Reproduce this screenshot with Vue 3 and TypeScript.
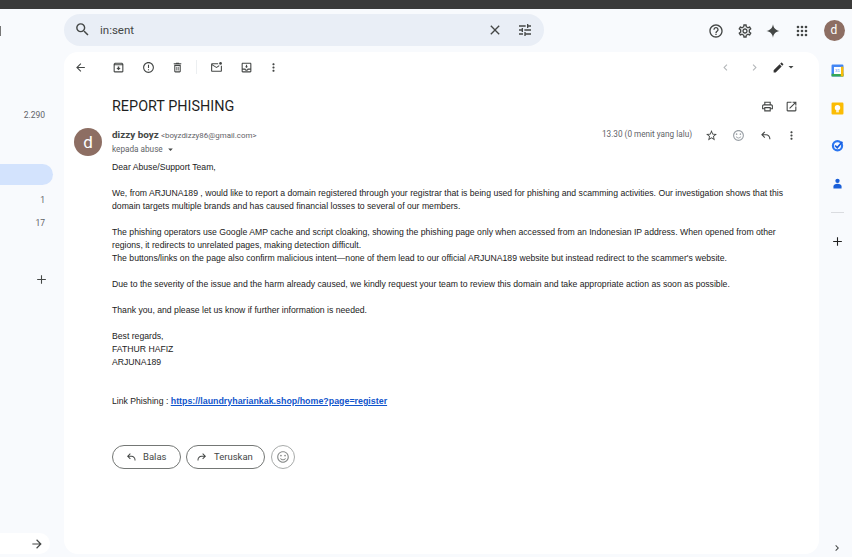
<template>
  <div class="page">
    <div class="topstrip"></div>

    <header class="header">
      <div class="menu-edge"></div>
      <div class="search">
        <svg class="ic search-ic" viewBox="0 0 24 24"><path :d="icons.search" /></svg>
        <span class="search-text">in:sent</span>
        <svg class="ic close-ic" viewBox="0 0 24 24"><path :d="icons.close" /></svg>
        <svg class="ic tune-ic" viewBox="0 0 24 24"><path :d="icons.tune" /></svg>
      </div>
      <div class="header-actions">
        <svg class="ic" viewBox="0 0 24 24"><path :d="icons.help" /></svg>
        <svg class="ic" viewBox="0 0 24 24"><path :d="icons.settings" /></svg>
        <svg class="ic" viewBox="0 0 24 24"><path :d="icons.spark" /></svg>
        <svg class="ic" viewBox="0 0 24 24"><path :d="icons.apps" /></svg>
      </div>
      <div class="account">d</div>
    </header>

    <div class="body">
      <aside class="sidebar">
        <span class="count count-main">2.290</span>
        <div class="active-pill"></div>
        <span class="count count-one">1</span>
        <span class="count count-two">17</span>
        <svg class="side-plus" viewBox="0 0 24 24"><path :d="icons.plus" /></svg>
        <div class="side-foot">
          <svg viewBox="0 0 24 24"><path :d="icons.arrowRight" /></svg>
        </div>
      </aside>

      <main class="panel">
        <div class="toolbar">
          <svg class="tb back" viewBox="0 0 24 24"><path :d="icons.back" /></svg>
          <svg class="tb first" viewBox="0 0 24 24"><path :d="icons.archive" /></svg>
          <svg class="tb" viewBox="0 0 24 24"><path :d="icons.report" /></svg>
          <svg class="tb" viewBox="0 0 24 24"><path :d="icons.trash" /></svg>
          <span class="tb-divider"></span>
          <svg class="tb" viewBox="0 0 24 24"><path :d="icons.unread" /><circle cx="19.5" cy="4.5" r="2.5" /></svg>
          <svg class="tb" viewBox="0 0 24 24"><path :d="icons.moveTo" /></svg>
          <svg class="tb more" viewBox="0 0 24 24"><path :d="icons.more" /></svg>
          <div class="pager">
            <svg class="tb faded" viewBox="0 0 24 24"><path :d="icons.prev" /></svg>
            <svg class="tb faded" viewBox="0 0 24 24"><path :d="icons.next" /></svg>
            <svg class="tb pen" viewBox="0 0 24 24"><path :d="icons.pen" /></svg>
            <svg class="caret-big" viewBox="0 0 24 24"><path :d="icons.caret" /></svg>
          </div>
        </div>

        <div class="subject-row">
          <h1 class="subject">REPORT PHISHING</h1>
          <svg class="tb print" viewBox="0 0 24 24"><path :d="icons.print" /></svg>
          <svg class="tb" viewBox="0 0 24 24"><path :d="icons.open" /></svg>
        </div>

        <div class="message">
          <div class="avatar">d</div>
          <div class="content">
            <div class="meta">
              <div class="sender">
                <div class="from"><b class="name">dizzy boyz</b> <span class="addr">&lt;boyzdizzy86@gmail.com&gt;</span></div>
                <div class="to">kepada abuse <svg class="caret" viewBox="0 0 24 24"><path :d="icons.caret" /></svg></div>
              </div>
              <span class="time">13.30 (0 menit yang lalu)</span>
              <svg class="tb meta-ic" viewBox="0 0 24 24"><path :d="icons.star" /></svg>
              <svg class="tb meta-ic smile" viewBox="0 0 24 24"><path :d="icons.smile" /></svg>
              <svg class="tb meta-ic" viewBox="0 0 24 24"><path :d="icons.reply" /></svg>
              <svg class="tb meta-ic last" viewBox="0 0 24 24"><path :d="icons.more" /></svg>
            </div>

            <div class="mail">
              <p>Dear Abuse/Support Team,</p>
              <p>We, from ARJUNA189 , would like to report a domain registered through your registrar that is being used for phishing and scamming activities. Our investigation shows that this<br />domain targets multiple brands and has caused financial losses to several of our members.</p>
              <p>The phishing operators use Google AMP cache and script cloaking, showing the phishing page only when accessed from an Indonesian IP address. When opened from other<br />regions, it redirects to unrelated pages, making detection difficult.<br />The buttons/links on the page also confirm malicious intent—none of them lead to our official ARJUNA189 website but instead redirect to the scammer's website.</p>
              <p>Due to the severity of the issue and the harm already caused, we kindly request your team to review this domain and take appropriate action as soon as possible.</p>
              <p>Thank you, and please let us know if further information is needed.</p>
              <p>Best regards,<br />FATHUR HAFIZ<br />ARJUNA189</p>
              <p class="link-line">Link Phishing : <a href="#" class="link">https://laundryhariankak.shop/home?page=register</a></p>
            </div>

            <div class="actions">
              <button class="pill reply-btn">
                <svg viewBox="0 0 24 24"><path :d="icons.reply" /></svg>
                Balas
              </button>
              <button class="pill forward-btn">
                <svg class="flip" viewBox="0 0 24 24"><path :d="icons.reply" /></svg>
                Teruskan
              </button>
              <button class="emoji-btn">
                <svg viewBox="0 0 24 24"><path :d="icons.smile" /></svg>
              </button>
            </div>
          </div>
        </div>
      </main>

      <aside class="rail">
        <svg class="rail-ic" viewBox="0 0 24 24">
          <rect x="1" y="1" width="22" height="22" rx="2" fill="#4285f4" />
          <rect x="1" y="18" width="22" height="5" fill="#34a853" />
          <rect x="18" y="5" width="5" height="18" fill="#fbbc04" />
          <rect x="5.5" y="5.5" width="13" height="13" fill="#fff" />
          <text x="12" y="15.5" text-anchor="middle" class="cal-text">31</text>
        </svg>
        <svg class="rail-ic" viewBox="0 0 24 24">
          <rect x="1" y="1" width="22" height="22" rx="2" fill="#fbbc04" />
          <circle cx="12" cy="10.5" r="5" fill="#fff" />
          <rect x="9.5" y="13" width="5" height="3" fill="#fff" />
          <rect x="9.5" y="17" width="5" height="2" fill="#fff" />
        </svg>
        <svg class="rail-ic" viewBox="0 0 24 24">
          <circle cx="12" cy="12.5" r="8.5" fill="none" stroke="#2a75f0" stroke-width="4" />
          <path d="M7.5 12l4 4L21 5" fill="none" stroke="#1a5fe0" stroke-width="3.2" />
        </svg>
        <svg class="rail-ic" viewBox="0 0 24 24">
          <circle cx="12" cy="7" r="4" fill="#1a5fd8" />
          <path d="M4.5 21v-3.5c0-3 3.4-5 7.5-5s7.500 2 7.500 5V21z" fill="#1a5fd8" />
        </svg>
        <div class="rail-divider"></div>
        <svg class="rail-plus" viewBox="0 0 24 24"><path :d="icons.plus" /></svg>
        <svg class="rail-chevron" viewBox="0 0 24 24"><path :d="icons.next" /></svg>
      </aside>
    </div>
  </div>
</template>

<script setup lang="ts">
const icons: Record<string, string> = {
  search: 'M15.5 14h-.79l-.28-.27A6.471 6.471 0 0 0 16 9.5 6.5 6.5 0 1 0 9.5 16c1.61 0 3.09-.59 4.23-1.57l.27.28v.79l5 4.99L20.49 19l-4.99-5zm-6 0C7.01 14 5 11.99 5 9.5S7.01 5 9.5 5 14 7.01 14 9.5 11.99 14 9.5 14z',
  close: 'M19 6.41L17.59 5 12 10.59 6.41 5 5 6.41 10.59 12 5 17.59 6.41 19 12 13.41 17.59 19 19 17.59 13.41 12z',
  tune: 'M3 17v2h6v-2H3zM3 5v2h10V5H3zm10 16v-2h8v-2h-8v-2h-2v6h2zM7 9v2H3v2h4v2h2V9H7zm14 4v-2H11v2h10zm-6-4h2V7h4V5h-4V3h-2v6z',
  help: 'M11 18h2v-2h-2v2zm1-16C6.48 2 2 6.48 2 12s4.48 10 10 10 10-4.48 10-10S17.52 2 12 2zm0 18c-4.41 0-8-3.59-8-8s3.59-8 8-8 8 3.59 8 8-3.59 8-8 8zm0-14c-2.21 0-4 1.79-4 4h2c0-1.1.9-2 2-2s2 .9 2 2c0 2-3 1.75-3 5h2c0-2.25 3-2.5 3-5 0-2.21-1.79-4-4-4z',
  settings: 'M19.43 12.98c.04-.32.07-.64.07-.98 0-.34-.03-.66-.07-.98l2.11-1.65c.19-.15.24-.42.12-.64l-2-3.46c-.09-.16-.26-.25-.44-.25-.06 0-.12.01-.17.03l-2.49 1c-.52-.4-1.08-.73-1.69-.98l-.38-2.65C14.46 2.18 14.25 2 14 2h-4c-.25 0-.46.18-.49.42l-.38 2.65c-.61.25-1.17.59-1.69.98l-2.49-1c-.06-.02-.12-.03-.18-.03-.17 0-.34.09-.43.25l-2 3.46c-.13.22-.07.49.12.64l2.11 1.65c-.04.32-.07.65-.07.98 0 .33.03.66.07.98l-2.11 1.65c-.19.15-.24.42-.12.64l2 3.46c.09.16.26.25.44.25.06 0 .12-.01.17-.03l2.49-1c.52.4 1.08.73 1.69.98l.38 2.65c.03.24.24.42.49.42h4c.25 0 .46-.18.49-.42l.38-2.65c.61-.25 1.17-.59 1.69-.98l2.49 1c.06.02.12.03.18.03.17 0 .34-.09.43-.25l2-3.46c.12-.22.07-.49-.12-.64l-2.11-1.65zm-1.98-1.71c.04.31.05.52.05.73 0 .21-.02.43-.05.73l-.14 1.13.89.7 1.08.84-.7 1.21-1.27-.51-1.04-.42-.9.68c-.43.32-.84.56-1.25.73l-1.06.43-.16 1.13-.2 1.35h-1.4l-.19-1.35-.16-1.13-1.06-.43c-.43-.18-.83-.41-1.23-.71l-.91-.7-1.06.43-1.27.51-.7-1.21 1.08-.84.89-.7-.14-1.13c-.03-.31-.05-.54-.05-.74s.02-.43.05-.73l.14-1.13-.89-.7-1.08-.84.7-1.21 1.27.51 1.04.42.9-.68c.43-.32.84-.56 1.25-.73l1.06-.43.16-1.13.2-1.35h1.39l.19 1.35.16 1.13 1.06.43c.43.18.83.41 1.23.71l.91.7 1.06-.43 1.27-.51.7 1.21-1.07.85-.89.7.14 1.13zM12 8c-2.21 0-4 1.79-4 4s1.79 4 4 4 4-1.79 4-4-1.79-4-4-4zm0 6c-1.1 0-2-.9-2-2s.9-2 2-2 2 .9 2 2-.9 2-2 2z',
  spark: 'M12 2c.7 5.600 4.400 9.300 10 10-5.600.7-9.300 4.400-10 10-.7-5.600-4.400-9.300-10-10 5.600-.7 9.300-4.400 10-10z',
  apps: 'M6 4a2 2 0 1 0 0 4 2 2 0 0 0 0-4zM12 4a2 2 0 1 0 0 4 2 2 0 0 0 0-4zM18 4a2 2 0 1 0 0 4 2 2 0 0 0 0-4zM6 10a2 2 0 1 0 0 4 2 2 0 0 0 0-4zM12 10a2 2 0 1 0 0 4 2 2 0 0 0 0-4zM18 10a2 2 0 1 0 0 4 2 2 0 0 0 0-4zM6 16a2 2 0 1 0 0 4 2 2 0 0 0 0-4zM12 16a2 2 0 1 0 0 4 2 2 0 0 0 0-4zM18 16a2 2 0 1 0 0 4 2 2 0 0 0 0-4z',
  plus: 'M20 13h-7v7h-2v-7H4v-2h7V4h2v7h7v2z',
  arrowRight: 'M12 4l-1.41 1.41L16.17 11H4v2h12.17l-5.58 5.59L12 20l8-8z',
  back: 'M20 11H7.83l5.59-5.59L12 4l-8 8 8 8 1.41-1.41L7.83 13H20v-2z',
  archive: 'M20.54 5.23l-1.39-1.68C18.88 3.21 18.47 3 18 3H6c-.47 0-.88.21-1.16.55L3.46 5.23C3.17 5.57 3 6.02 3 6.5V19c0 1.1.9 2 2 2h14c1.1 0 2-.9 2-2V6.5c0-.48-.17-.93-.46-1.27zM6.24 5h11.52l.81.97H5.44l.8-.97zM5 19V8h14v11H5zm8.45-9h-2.9v3H8l4 4 4-4h-2.55z',
  report: 'M11 15h2v2h-2zm0-8h2v6h-2zm.99-5C6.47 2 2 6.48 2 12s4.47 10 9.99 10C17.52 22 22 17.52 22 12S17.52 2 11.99 2zM12 20c-4.42 0-8-3.58-8-8s3.58-8 8-8 8 3.58 8 8-3.58 8-8 8z',
  trash: 'M6 19c0 1.1.9 2 2 2h8c1.1 0 2-.9 2-2V7H6v12zM8 9h8v10H8V9zm7.5-5l-1-1h-5l-1 1H5v2h14V4zM10 10.5h1.4v7H10zM12.6 10.5H14v7h-1.4z',
  unread: 'M20 8.9V18H4V8l8 5 5-3.1V7.5L12 11 4 6h11V4H4c-1.1 0-2 .9-2 2v12c0 1.1.9 2 2 2h16c1.1 0 2-.9 2-2V8.9z',
  moveTo: 'M19 3H5c-1.1 0-2 .9-2 2v14c0 1.1.9 2 2 2h14c1.1 0 2-.9 2-2V5c0-1.1-.9-2-2-2zm0 16H5v-3h3.56c.69 1.19 1.97 2 3.45 2s2.75-.81 3.45-2H19v3zm0-5h-4.99c0 1.1-.9 2-2 2s-2-.9-2-2H5V5h14v9zM15 10h-2V7h-2v3H9l3 3z',
  more: 'M12 8c1.1 0 2-.9 2-2s-.9-2-2-2-2 .9-2 2 .9 2 2 2zm0 2c-1.1 0-2 .9-2 2s.9 2 2 2 2-.9 2-2-.9-2-2-2zm0 6c-1.1 0-2 .9-2 2s.9 2 2 2 2-.9 2-2-.9-2-2-2z',
  prev: 'M15.41 7.41L14 6l-6 6 6 6 1.41-1.41L10.83 12z',
  next: 'M10 6L8.59 7.41 13.17 12l-4.58 4.59L10 18l6-6z',
  pen: 'M3 17.25V21h3.75L17.81 9.94l-3.75-3.75L3 17.25zM20.71 7.04c.39-.39.39-1.02 0-1.41l-2.34-2.34c-.39-.39-1.02-.39-1.41 0l-1.83 1.83 3.75 3.75 1.83-1.83z',
  caret: 'M7 10l5 5 5-5z',
  print: 'M19 8h-1V3H6v5H5c-1.66 0-3 1.34-3 3v6h4v4h12v-4h4v-6c0-1.66-1.34-3-3-3zM8 5h8v3H8V5zm8 14H8v-4h8v4zm4-4h-2v-2H6v2H4v-4c0-.55.45-1 1-1h14c.55 0 1 .45 1 1v4z',
  open: 'M19 19H5V5h7V3H5c-1.11 0-2 .9-2 2v14c0 1.1.89 2 2 2h14c1.1 0 2-.9 2-2v-7h-2v7zM14 3v2h3.59l-9.83 9.83 1.41 1.41L19 6.41V10h2V3h-7z',
  star: 'M22 9.24l-7.19-.62L12 2 9.19 8.63 2 9.24l5.46 4.73L5.82 21 12 17.27 18.18 21l-1.63-7.03L22 9.24zM12 15.4l-3.76 2.27 1-4.28-3.32-2.88 4.38-.38L12 6.1l1.71 4.04 4.38.38-3.32 2.88 1 4.28L12 15.4z',
  smile: 'M11.99 2C6.47 2 2 6.48 2 12s4.47 10 9.99 10C17.52 22 22 17.52 22 12S17.52 2 11.99 2zM12 20c-4.42 0-8-3.58-8-8s3.58-8 8-8 8 3.58 8 8-3.58 8-8 8zM8.5 8a1.5 1.5 0 1 0 0 3 1.5 1.5 0 0 0 0-3zM15.5 8a1.5 1.5 0 1 0 0 3 1.5 1.5 0 0 0 0-3zM12 16c-1.48 0-2.75-.81-3.45-2H6.88c.8 2.05 2.79 3.5 5.12 3.5s4.32-1.45 5.12-3.5h-1.67c-.7 1.19-1.97 2-3.45 2z',
  reply: 'M21 19h-2v-1.5c0-3.3-2.7-6-6-6H7.83l3.58 3.59L10 16.5l-6-6 6-6 1.41 1.41L7.83 9.5H13c4.4 0 8 3.6 8 8z',
}
</script>

<style>
html,
body {
  margin: 0;
  overflow: hidden;
  background: #f8fafd;
}
</style>

<style scoped>
.page {
  width: 852px;
  height: 557px;
  display: flex;
  flex-direction: column;
  background: #f8fafd;
  font-family: "Liberation Sans", Arial, sans-serif;
  color: #222;
  overflow: hidden;
}

.topstrip {
  height: 9px;
  background: #3a3a3a;
  flex-shrink: 0;
}

.header {
  height: 43px;
  display: flex;
  align-items: center;
  flex-shrink: 0;
}

.menu-edge {
  width: 1px;
  height: 10px;
  margin-right: 63px;
  background: #777;
}

.search {
  width: 480px;
  height: 32px;
  margin-top: -2px;
  border-radius: 16px;
  background: #e9eef6;
  display: flex;
  align-items: center;
  box-sizing: border-box;
  padding-left: 10px;
}

.ic {
  width: 16px;
  height: 16px;
  fill: #444746;
  flex-shrink: 0;
}

.search-ic {
  width: 17px;
  height: 17px;
}

.search-text {
  margin-left: 9px;
  flex: 1;
  font-family: Roboto, sans-serif;
  font-size: 11.5px;
  color: #444746;
}

.close-ic {
  margin-right: 14px;
}

.tune-ic {
  margin-right: 11px;
}

.header-actions {
  margin-left: 164px;
  display: flex;
  gap: 12.5px;
  align-items: center;
}

.account {
  width: 21px;
  height: 21px;
  margin-left: 14px;
  border-radius: 50%;
  background: #8d6e63;
  color: #fff;
  font-family: Roboto, sans-serif;
  font-size: 12px;
  line-height: 21px;
  text-align: center;
}

.body {
  flex: 1;
  display: flex;
  min-height: 0;
  padding-bottom: 3px;
}

.sidebar {
  width: 64px;
  flex-shrink: 0;
  display: flex;
  flex-direction: column;
  align-items: flex-start;
  font-family: Roboto, sans-serif;
}

.count {
  width: 45px;
  text-align: right;
  font-size: 8.5px;
  color: #5f6368;
  line-height: 10px;
}

.count-main {
  margin-top: 58px;
}

.active-pill {
  width: 53px;
  height: 21px;
  margin-top: 44px;
  background: #d3e3fd;
  border-radius: 0 11px 11px 0;
}

.count-one {
  margin-top: 10px;
}

.count-two {
  margin-top: 13px;
}

.side-plus {
  width: 13px;
  height: 13px;
  margin: 45px 0 0 35px;
  fill: #444746;
}

.side-foot {
  width: 50px;
  height: 21px;
  margin-top: auto;
  background: #fff;
  border-radius: 0 11px 11px 0;
  display: flex;
  align-items: center;
  justify-content: flex-end;
  padding-right: 6px;
  box-sizing: border-box;
}

.side-foot svg {
  width: 14px;
  height: 14px;
  fill: #444746;
}

.panel {
  width: 755px;
  flex-shrink: 0;
  background: #fff;
  border-radius: 14px;
  display: flex;
  flex-direction: column;
}

.toolbar {
  height: 30px;
  display: flex;
  align-items: center;
}

.tb {
  width: 13px;
  height: 13px;
  fill: #444746;
  flex-shrink: 0;
}

.back {
  margin-left: 10px;
}

.first {
  margin-left: 25px;
}

.toolbar .tb + .tb:not(.first) {
  margin-left: 16.5px;
}

.tb-divider {
  width: 1px;
  height: 14px;
  background: #eceff1;
  margin: 0 13px 0 12px;
}

.toolbar .tb-divider + .tb {
  margin-left: 0;
}

.toolbar .more {
  margin-left: 14px !important;
}

.pager {
  margin-left: auto;
  display: flex;
  align-items: center;
  padding-right: 22px;
}

.pager .faded {
  fill: #b4b7ba;
}

.pager .tb + .tb {
  margin-left: 13px;
}

.pager .pen {
  margin-left: 11px !important;
  fill: #333;
}

.caret-big {
  width: 12px;
  height: 12px;
  fill: #444746;
}

.subject-row {
  display: flex;
  align-items: center;
  height: 24px;
  margin-top: 12px;
  padding-left: 48px;
  padding-right: 21px;
}

.subject {
  flex: 1;
  margin: 0;
  font-family: Roboto, sans-serif;
  font-weight: 400;
  font-size: 14.4px;
  color: #1f1f1f;
}

.print {
  margin-right: 11px;
}

.message {
  display: flex;
  padding-left: 10px;
  margin-top: 11px;
}

.avatar {
  width: 28px;
  height: 28px;
  margin-top: -1px;
  border-radius: 50%;
  background: #8d6e63;
  color: #fff;
  font-family: Roboto, sans-serif;
  font-size: 17px;
  line-height: 28px;
  text-align: center;
  flex-shrink: 0;
}

.content {
  flex: 1;
  margin-left: 10px;
  min-width: 0;
}

.meta {
  display: flex;
  align-items: flex-start;
  padding-right: 21px;
}

.sender {
  flex: 1;
  font-family: Roboto, sans-serif;
}

.from {
  font-size: 9px;
  line-height: 11px;
}

.name {
  font-size: 9.9px;
  font-weight: 700;
  color: #444746;
}

.addr {
  font-size: 7.9px;
  color: #5f6368;
}

.to {
  margin-top: 3px;
  height: 10px;
  font-size: 8.2px;
  line-height: 10px;
  color: #5f6368;
  display: flex;
  align-items: center;
  gap: 2px;
}

.caret {
  width: 11px;
  height: 11px;
  fill: #444746;
}

.time {
  font-family: Roboto, sans-serif;
  font-size: 8.2px;
  color: #5f6368;
  margin-right: 13px;
}

.meta-ic {
  margin-left: 14px;
}

.meta .time + .meta-ic {
  margin-left: 0;
}

.meta .last {
  margin-left: 13px;
}

.smile {
  fill: #9aa0a6;
}

.mail {
  margin-top: 6.5px;
  font-size: 8.67px;
  line-height: 13px;
  color: #222;
}

.mail p {
  margin: 0 0 13px;
}

.link-line {
  margin-top: 26px !important;
}

.link {
  color: #1155cc;
  font-size: 8.87px;
  font-weight: 700;
}

.actions {
  display: flex;
  align-items: center;
  gap: 5px;
  margin-top: 37px;
}

.pill {
  height: 24px;
  border: 1px solid #747775;
  border-radius: 12px;
  background: #fff;
  display: flex;
  align-items: center;
  gap: 6px;
  font-family: Roboto, sans-serif;
  font-size: 9.5px;
  color: #444746;
  padding: 0;
}

.pill svg {
  width: 12px;
  height: 12px;
  fill: #444746;
}

.reply-btn {
  width: 69px;
  padding-left: 12px;
}

.forward-btn {
  width: 79px;
  padding-left: 9px;
}

.flip {
  transform: scaleX(-1);
}

.emoji-btn {
  width: 24px;
  height: 24px;
  margin-left: 1px;
  padding: 0;
  border: 1px solid #a8abaa;
  border-radius: 50%;
  background: #fff;
  display: flex;
  align-items: center;
  justify-content: center;
}

.emoji-btn svg {
  width: 14px;
  height: 14px;
  fill: #8a8d8c;
}

.rail {
  flex: 1;
  display: flex;
  flex-direction: column;
  align-items: center;
  padding-top: 12px;
  padding-left: 3px;
}

.rail-ic {
  width: 13px;
  height: 13px;
  margin-bottom: 24.5px;
}

.cal-text {
  font-family: "Liberation Sans", sans-serif;
  font-size: 8px;
  fill: #4285f4;
}

.rail-divider {
  width: 13px;
  height: 1px;
  background: #dadce0;
  margin-top: -2px;
}

.rail-plus {
  width: 13px;
  height: 13px;
  margin-top: 22px;
  fill: #1f1f1f;
}

.rail-chevron {
  width: 12px;
  height: 12px;
  margin-top: auto;
  fill: #444746;
}
</style>
